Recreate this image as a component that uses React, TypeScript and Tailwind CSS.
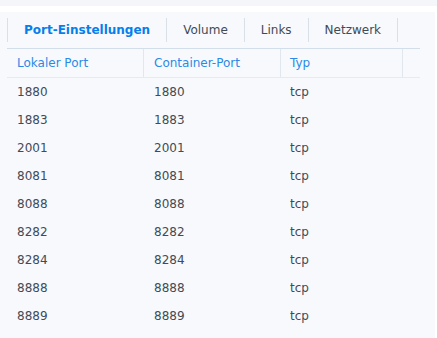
import React from "react";

const rows = [
  ["1880", "1880", "tcp"],
  ["1883", "1883", "tcp"],
  ["2001", "2001", "tcp"],
  ["8081", "8081", "tcp"],
  ["8088", "8088", "tcp"],
  ["8282", "8282", "tcp"],
  ["8284", "8284", "tcp"],
  ["8888", "8888", "tcp"],
  ["8889", "8889", "tcp"],
];

const tabs = ["Port-Einstellungen", "Volume", "Links", "Netzwerk"];

export default function App() {
  return (
    <div
      className="w-[437px] h-[338px] bg-white overflow-hidden text-[12px] text-[#414b55]"
      style={{ fontFamily: '"DejaVu Sans", Verdana, sans-serif' }}
    >
      <div className="h-[6px] bg-[#f4f6f9]" />
      <div className="h-[6px] bg-white" />
      <div className="w-[435px] h-[326px] bg-[#f8f9fd] pt-[6px] pl-[7px]">
        <div className="flex h-[24px] border-l border-[#d9e0e8]">
          {tabs.map((t, i) => (
            <div
              key={t}
              className={
                "flex items-center px-[16px] border-r border-[#d9e0e8] " +
                (i === 0 ? "font-bold text-[#057feb]" : "text-[#414b55]")
              }
            >
              {t}
            </div>
          ))}
        </div>
        <div className="w-[413px] mt-[6px]">
          <div className="flex h-[30px] border-t border-b border-t-[#d3deeb] border-b-[#e6ebf1] text-[#2a8ae6]">
            <div className="w-[137px] flex items-center pl-[10px] border-r border-[#e1e7ee]">Lokaler Port</div>
            <div className="w-[137px] flex items-center pl-[10px] border-r border-[#e1e7ee]">Container-Port</div>
            <div className="w-[122px] flex items-center pl-[9px] border-r border-[#e1e7ee]">Typ</div>
            <div className="flex-1" />
          </div>
          {rows.map((r, i) => (
            <div key={i} className="flex h-[28px] items-center">
              <div className="w-[137px] pl-[10px]">{r[0]}</div>
              <div className="w-[137px] pl-[10px]">{r[1]}</div>
              <div className="w-[122px] pl-[9px]">{r[2]}</div>
            </div>
          ))}
        </div>
      </div>
    </div>
  );
}
